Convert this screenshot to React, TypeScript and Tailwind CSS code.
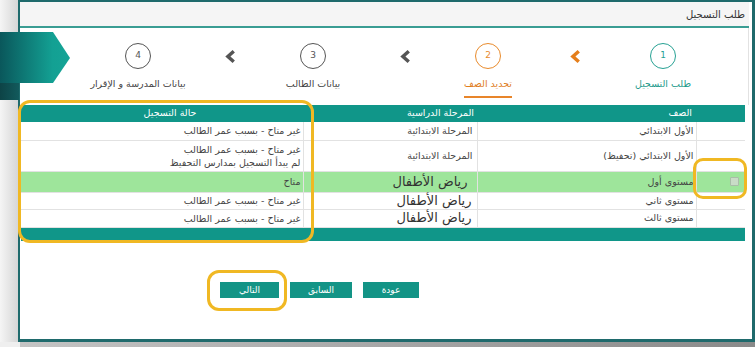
import React from "react";

function Chevron({ color }: { color: string }) {
  return (
    <svg width="13" height="13" viewBox="0 0 12 12">
      <path d="M9 1.2 L3.6 6 L9 10.8" fill="none" stroke={color} strokeWidth="3.2" strokeLinejoin="miter" />
    </svg>
  );
}

function Step({
  n,
  label,
  ring,
  text,
  underline,
}: {
  n: number;
  label: string;
  ring: string;
  text: string;
  underline?: boolean;
}) {
  return (
    <div className="w-[100px] flex flex-col items-center">
      <div className={`w-[26px] h-[26px] rounded-full border-[1.5px] flex items-center justify-center text-[9px] ${ring}`}>
        {n}
      </div>
      <div className={`mt-[8px] text-[9.5px] leading-[14px] whitespace-nowrap ${text} ${underline ? "pb-[5px] border-b-2 border-[#e8852a]" : ""}`}>
        {label}
      </div>
    </div>
  );
}

const rows = [
  { grade: "الأول الابتدائي", stage: "المرحلة الابتدائية", big: false, status: ["غير متاح - بسبب عمر الطالب"], h: "h-[18px]", green: false },
  { grade: "الأول الابتدائي (تحفيظ)", stage: "المرحلة الابتدائية", big: false, status: ["غير متاح - بسبب عمر الطالب", "لم يبدأ التسجيل بمدارس التحفيظ"], h: "h-[31px]", green: false },
  { grade: "مستوى أول", stage: "رياض الأطفال", big: true, status: ["متاح"], h: "h-[21px]", green: true },
  { grade: "مستوى ثاني", stage: "رياض الأطفال", big: true, status: ["غير متاح - بسبب عمر الطالب"], h: "h-[17px]", green: false },
  { grade: "مستوى ثالث", stage: "رياض الأطفال", big: true, status: ["غير متاح - بسبب عمر الطالب"], h: "h-[18px]", green: false },
];

export default function App() {
  return (
    <div className="relative w-[755px] h-[347px] overflow-hidden bg-[#f1f1f1] font-['DejaVu_Sans',sans-serif] flex flex-col">
      <div className="flex h-[342px]">
        <div className="w-[18px] bg-gradient-to-r from-[#f5f5f5] to-[#d6d6d6]" />
        <div dir="rtl" className="flex-1 flex flex-col bg-white border-t-2 border-l-2 border-r-[3px] border-b-[3px] border-[#1f6a6c]">
          {/* header */}
          <div className="h-[26px] bg-[#f5f5f5] border-b-2 border-[#3a9d93] flex items-center pr-[4px] mr-[3px]">
            <span className="text-[10px] text-[#333]">طلب التسجيل</span>
          </div>
          {/* stepper */}
          <div className="h-[77px] flex items-start pt-[15px] pr-[35px] border-r border-[#e2e2e2] mr-[3px]">
            <Step n={1} label="طلب التسجيل" ring="border-[#26a193] text-[#26a193]" text="text-[#1e9a8b]" />
            <div className="w-[75px] h-[26px] flex items-center justify-center">
              <Chevron color="#e57f1c" />
            </div>
            <Step n={2} label="تحديد الصف" ring="border-[#e98b2c] text-[#e98b2c]" text="text-[#e07d1d]" underline />
            <div className="w-[75px] h-[26px] flex items-center justify-center">
              <div className="ml-[10px] flex"><Chevron color="#555" /></div>
            </div>
            <Step n={3} label="بيانات الطالب" ring="border-[#555] text-[#555]" text="text-[#444]" />
            <div className="w-[75px] h-[26px] flex items-center justify-center">
              <div className="ml-[10px] flex"><Chevron color="#555" /></div>
            </div>
            <Step n={4} label="بيانات المدرسة و الإقرار" ring="border-[#555] text-[#555]" text="text-[#444]" />
          </div>
          {/* table */}
          <div className="mr-[7px] ml-[1px]">
            <table className="w-[724px] table-fixed border-collapse text-[9.5px] text-[#444]">
              <colgroup>
                <col className="w-[49px]" />
                <col className="w-[219px]" />
                <col className="w-[174px]" />
                <col className="w-[282px]" />
              </colgroup>
              <thead>
                <tr className="h-[17px] bg-[#109689] text-white">
                  <th className="p-0" />
                  <th className="p-0 pr-[4px] text-right font-normal">الصف</th>
                  <th className="p-0 pr-[3px] text-right font-normal">المرحلة الدراسية</th>
                  <th className="p-0 pl-[16px] text-center font-normal">حالة التسجيل</th>
                </tr>
              </thead>
              <tbody>
                {rows.map((r, i) => (
                  <tr key={i} className={`${r.h} ${r.green ? "bg-[#9ee59b]" : "bg-white"} border-b border-[#e2e2e2]`}>
                    <td className="p-0 pr-[6px] border-l border-[#e2e2e2]">
                      {r.green && (
                        <div className="w-[9px] h-[9px] rounded-[1px] border border-[#a9bea8] bg-[#c9dcc7]" />
                      )}
                    </td>
                    <td className="p-0 pr-[2px] text-right border-l border-[#e2e2e2] leading-[14px]">{r.grade}</td>
                    <td className="p-0 text-right border-l border-[#e2e2e2]">
                      {r.big ? (
                        <span className={`block text-[13px] font-normal text-[#333] leading-[16px] ${r.green ? "pr-[9px]" : "pr-[5px]"}`}>{r.stage}</span>
                      ) : (
                        <span className="block pr-[4px] leading-[14px]">{r.stage}</span>
                      )}
                    </td>
                    <td className="p-0 pr-[2px] text-right leading-[13px]">
                      {r.status.map((s, j) => (
                        <div key={j}>{s}</div>
                      ))}
                    </td>
                  </tr>
                ))}
                <tr className="h-[14px] bg-[#109689]">
                  <td colSpan={4} className="p-0" />
                </tr>
              </tbody>
            </table>
          </div>
          {/* buttons */}
          <div className="mt-[41px] flex pr-[333px] gap-[11px]">
            <button className="w-[56px] h-[16px] bg-[#139486] text-white text-[9px] leading-[16px]">عودة</button>
            <button className="w-[62px] h-[16px] bg-[#139486] text-white text-[9px] leading-[16px]">السابق</button>
            <button className="w-[59px] h-[16px] bg-[#139486] text-white text-[9px] leading-[16px]">التالي</button>
          </div>
        </div>
      </div>
      <div className="flex h-[5px]">
        <div className="w-[20px] bg-[#efefef]" />
        <div className="flex-1 bg-gradient-to-r from-[#c4c4c4] to-[#8a8a8a]" />
      </div>

      {/* ribbon */}
      <svg className="absolute left-0 top-[32px]" width="72" height="68" viewBox="0 0 72 68">
        <defs>
          <linearGradient id="rib" x1="0" x2="1" y1="0" y2="0">
            <stop offset="0" stopColor="#0a575b" />
            <stop offset="0.75" stopColor="#13a093" />
            <stop offset="1" stopColor="#15a496" />
          </linearGradient>
          <linearGradient id="ribdark" x1="0" x2="1" y1="0" y2="0">
            <stop offset="0" stopColor="#0d4346" />
            <stop offset="1" stopColor="#125a5c" />
          </linearGradient>
        </defs>
        <rect x="0" y="51" width="19" height="17" fill="url(#ribdark)" />
        <polygon points="0,0 53,0 70,26 53,51 0,51" fill="url(#rib)" />
      </svg>

      {/* annotations */}
      <div className="absolute left-[18px] top-[100px] w-[296px] h-[143px] rounded-[12px] border-[3px] border-[#f0b823]" />
      <div className="absolute left-[693px] top-[158px] w-[54px] h-[41px] rounded-[10px] border-[3px] border-[#f0b823]" />
      <div className="absolute left-[207px] top-[270px] w-[80px] h-[41px] rounded-[12px] border-[3px] border-[#f0b823]" />
    </div>
  );
}
